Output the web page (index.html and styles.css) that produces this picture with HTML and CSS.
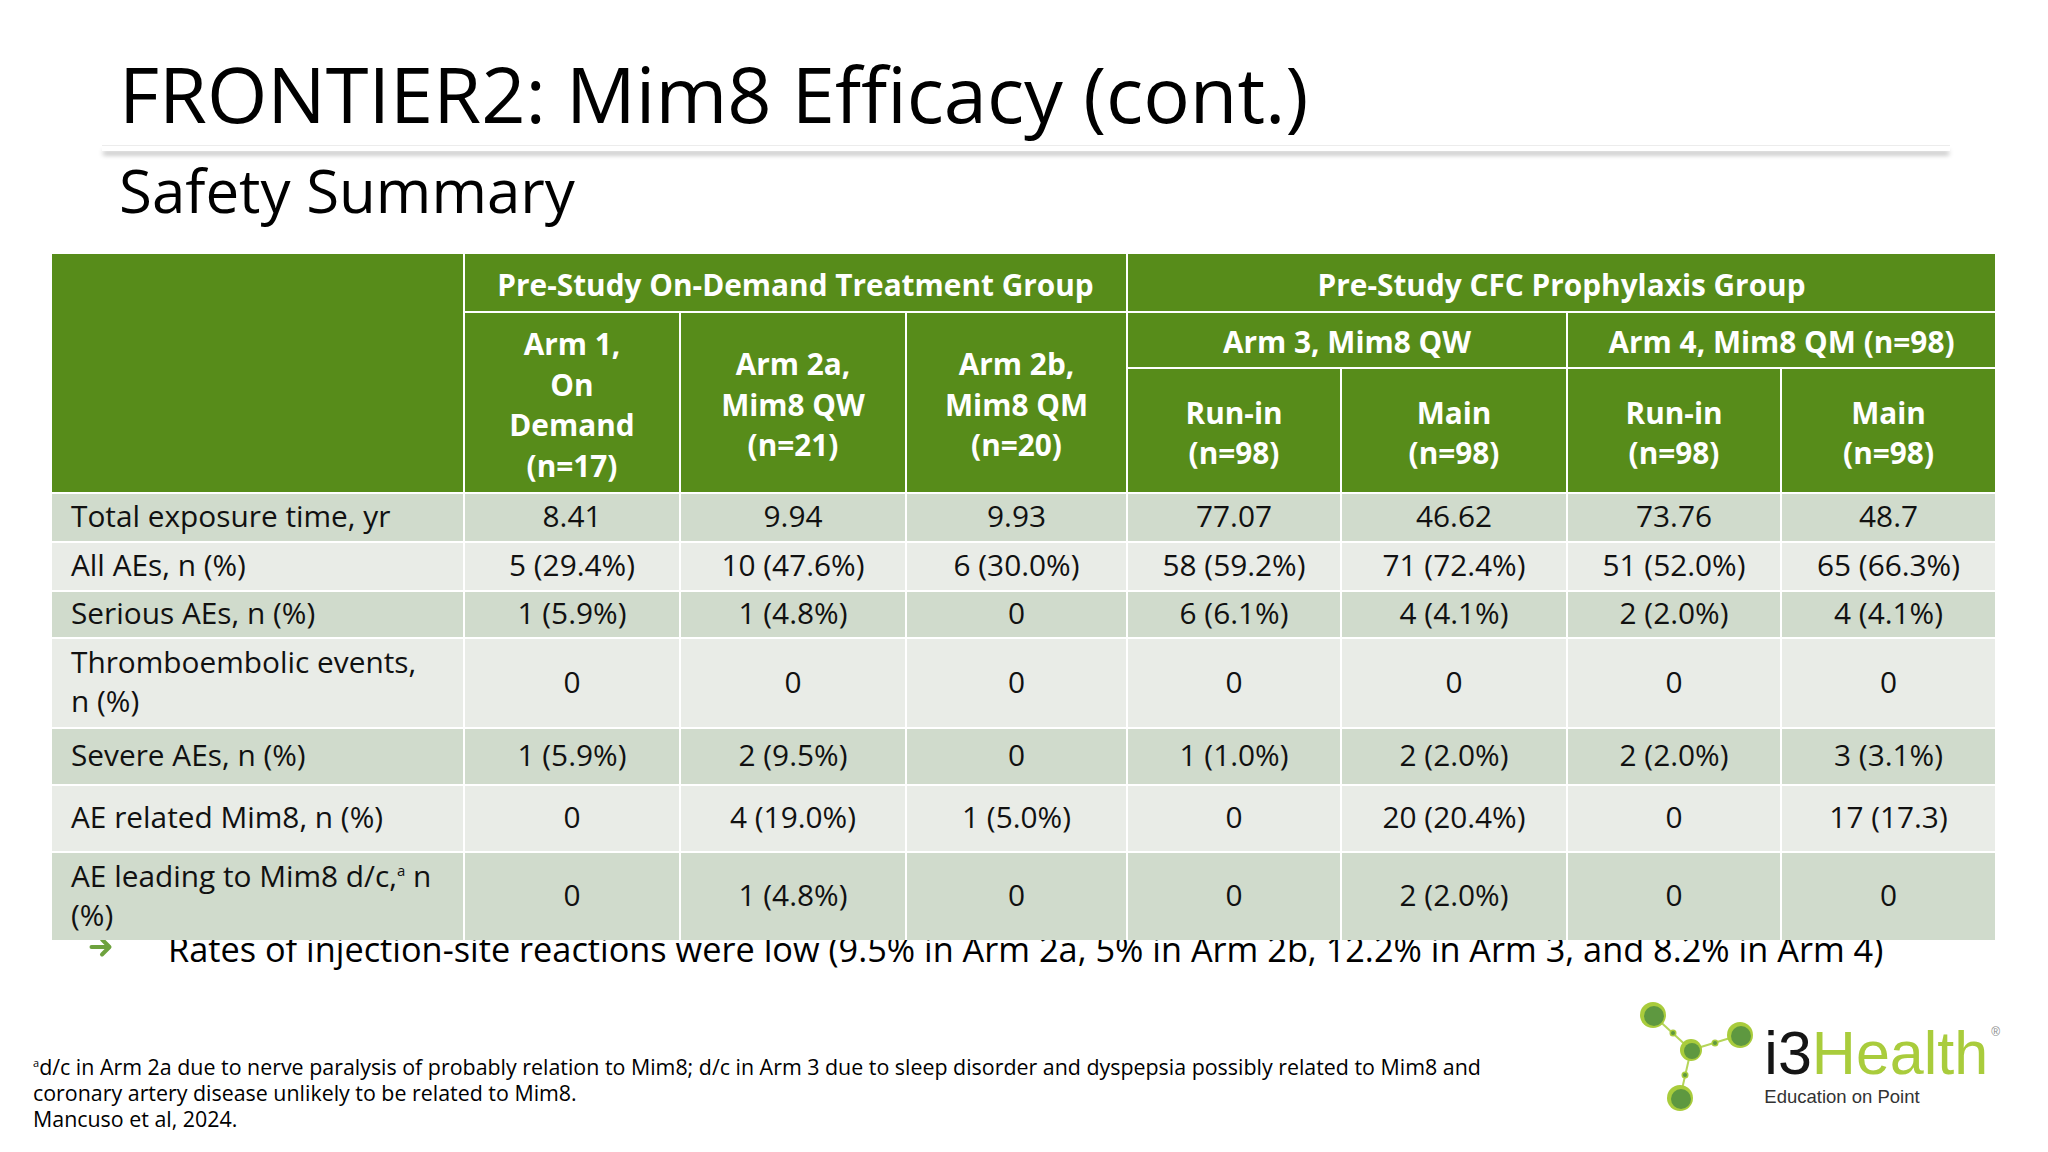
FILE: index.html
```html
<!DOCTYPE html>
<html lang="en">
<head>
<meta charset="utf-8">
<title>FRONTIER2: Mim8 Efficacy (cont.)</title>
<link rel="stylesheet" href="styles.css">
</head>
<body>
<div class="slide">
  <h1 class="title">FRONTIER2: Mim8 Efficacy (cont.)</h1>
  <div class="rule"></div>
  <h2 class="subtitle">Safety Summary</h2>

  <table class="safety">
    <colgroup>
      <col class="c-label">
      <col class="c-216">
      <col class="c-226">
      <col class="c-221">
      <col class="c-214">
      <col class="c-226">
      <col class="c-214">
      <col class="c-214">
    </colgroup>
    <thead>
      <tr class="h1">
        <th rowspan="3" class="corner"></th>
        <th colspan="3">Pre-Study On-Demand Treatment Group</th>
        <th colspan="4">Pre-Study CFC Prophylaxis Group</th>
      </tr>
      <tr class="h2">
        <th rowspan="2">Arm 1,<br>On<br>Demand<br>(n=17)</th>
        <th rowspan="2">Arm 2a,<br>Mim8 QW<br>(n=21)</th>
        <th rowspan="2">Arm 2b,<br>Mim8 QM<br>(n=20)</th>
        <th colspan="2">Arm 3, Mim8 QW</th>
        <th colspan="2">Arm 4, Mim8 QM (n=98)</th>
      </tr>
      <tr class="h3">
        <th>Run-in<br>(n=98)</th>
        <th>Main<br>(n=98)</th>
        <th>Run-in<br>(n=98)</th>
        <th>Main<br>(n=98)</th>
      </tr>
    </thead>
    <tbody>
      <tr class="dark r1">
        <td class="label">Total exposure time, yr</td>
        <td>8.41</td><td>9.94</td><td>9.93</td><td>77.07</td><td>46.62</td><td>73.76</td><td>48.7</td>
      </tr>
      <tr class="light r2">
        <td class="label">All AEs, n (%)</td>
        <td>5 (29.4%)</td><td>10 (47.6%)</td><td>6 (30.0%)</td><td>58 (59.2%)</td><td>71 (72.4%)</td><td>51 (52.0%)</td><td>65 (66.3%)</td>
      </tr>
      <tr class="dark r3">
        <td class="label">Serious AEs, n (%)</td>
        <td>1 (5.9%)</td><td>1 (4.8%)</td><td>0</td><td>6 (6.1%)</td><td>4 (4.1%)</td><td>2 (2.0%)</td><td>4 (4.1%)</td>
      </tr>
      <tr class="light r4">
        <td class="label">Thromboembolic events,<br>n (%)</td>
        <td>0</td><td>0</td><td>0</td><td>0</td><td>0</td><td>0</td><td>0</td>
      </tr>
      <tr class="dark r5">
        <td class="label">Severe AEs, n (%)</td>
        <td>1 (5.9%)</td><td>2 (9.5%)</td><td>0</td><td>1 (1.0%)</td><td>2 (2.0%)</td><td>2 (2.0%)</td><td>3 (3.1%)</td>
      </tr>
      <tr class="light r6">
        <td class="label">AE related Mim8, n (%)</td>
        <td>0</td><td>4 (19.0%)</td><td>1 (5.0%)</td><td>0</td><td>20 (20.4%)</td><td>0</td><td>17 (17.3)</td>
      </tr>
      <tr class="dark r7">
        <td class="label">AE leading to Mim8 d/c,<sup>a</sup> n<br>(%)</td>
        <td>0</td><td>1 (4.8%)</td><td>0</td><td>0</td><td>2 (2.0%)</td><td>0</td><td>0</td>
      </tr>
    </tbody>
  </table>

  <div class="bullet">
    <svg class="arrow" viewBox="0 0 24 24" width="24" height="24" aria-hidden="true">
      <path d="M2.5 12 H20 M13 4.5 L20.5 12 L13 19.5" fill="none" stroke="#6ea23e" stroke-width="4" stroke-linecap="round" stroke-linejoin="round"/>
    </svg>
    <p class="bullet-text">Rates of injection-site reactions were low (9.5% in Arm 2a, 5% in Arm 2b, 12.2% in Arm 3, and 8.2% in Arm 4)</p>
  </div>

  <footer class="footer">
    <div class="footnote">
      <p><sup>a</sup>d/c in Arm 2a due to nerve paralysis of probably relation to Mim8; d/c in Arm 3 due to sleep disorder and dyspepsia possibly related to Mim8 and</p>
      <p>coronary artery disease unlikely to be related to Mim8.</p>
      <p>Mancuso et al, 2024.</p>
    </div>
    <div class="logo">
      <svg class="logo-mark" viewBox="0 0 125 125" width="125" height="125" aria-hidden="true">
        <g stroke="#b5d55a" stroke-width="2" fill="none">
          <line x1="17" y1="20" x2="55" y2="55"/>
          <line x1="55" y1="55" x2="104" y2="40"/>
          <line x1="55" y1="55" x2="44" y2="103"/>
        </g>
        <g fill="#a9cc3c">
          <circle cx="17" cy="20" r="13"/>
          <circle cx="104" cy="40" r="13"/>
          <circle cx="55" cy="55" r="11"/>
          <circle cx="44" cy="103" r="13"/>
          <circle cx="37" cy="38" r="3.5"/>
          <circle cx="79" cy="48" r="3.5"/>
          <circle cx="49" cy="80" r="3.5"/>
        </g>
        <g fill="#5e9840">
          <circle cx="18" cy="21" r="10"/>
          <circle cx="105" cy="41" r="10"/>
          <circle cx="56" cy="56" r="8"/>
          <circle cx="45" cy="104" r="10"/>
          <circle cx="37" cy="38" r="2"/>
          <circle cx="79" cy="48" r="2"/>
          <circle cx="49" cy="80" r="2"/>
        </g>
      </svg>
      <div class="logo-text">
        <div class="brand"><span class="i3">i3</span><span class="health">Health</span><span class="reg">®</span></div>
        <div class="tagline">Education on Point</div>
      </div>
    </div>
  </footer>
</div>
</body>
</html>
```

FILE: styles.css
```css
* { box-sizing: border-box; }

html, body {
  margin: 0;
  padding: 0;
  background: #ffffff;
}

.slide {
  width: 2048px;
  height: 1152px;
  overflow: hidden;
  background: #ffffff;
  display: flex;
  flex-direction: column;
  font-family: "Open Sans", "Noto Sans", sans-serif;
  color: #111111;
}

.title {
  margin: 55px 0 0 119px;
  font-size: 77.6px;
  line-height: 77px;
  font-weight: 400;
  color: #000000;
  white-space: nowrap;
}

.rule {
  margin: 13px 0 0 102px;
  width: 1848px;
  height: 6px;
  background: #ffffff;
  border-top: 1px solid #ececec;
  box-shadow: 0 5px 5px -1px rgba(0, 0, 0, 0.28);
}

.subtitle {
  margin: 10px 0 0 119px;
  font-size: 60px;
  line-height: 59px;
  font-weight: 400;
  color: #000000;
}

.safety {
  position: relative;
  z-index: 1;
  margin: 34px 0 0 52px;
  width: 1943px;
  table-layout: fixed;
  border-collapse: collapse;
  font-size: 29.8px;
  line-height: 40px;
}

.c-label { width: 412px; }
.c-216 { width: 216px; }
.c-226 { width: 226px; }
.c-221 { width: 221px; }
.c-214 { width: 214px; }

.safety th,
.safety td {
  border: 2px solid #ffffff;
  padding: 0;
  text-align: center;
  vertical-align: middle;
}

.safety tr:first-child th { border-top: 0; }
.safety tr th:last-child,
.safety tr td:last-child { border-right: 0; }
.safety th.corner,
.safety td.label { border-left: 0; }
.safety tbody tr:last-child td { border-bottom: 0; }

.safety th {
  background: #578c1a;
  color: #ffffff;
  font-weight: 700;
  line-height: 40.5px;
  padding-top: 5px;
}

.h1 { height: 58px; }
.h2 { height: 56px; }
.h3 { height: 125px; }

.r1 { height: 49px; }
.r2 { height: 49px; }
.r3 { height: 47px; }
.r4 { height: 90px; }
.r5 { height: 57px; }
.r6 { height: 67px; }
.r7 { height: 88px; }

.safety td {
  color: #111111;
  line-height: 39px;
  padding-bottom: 4px;
}

.dark td { background: #d0dbcc; }
.light td { background: #e9ece7; }

.safety td.label {
  text-align: left;
  padding-left: 19px;
  white-space: nowrap;
}

.safety td.label sup {
  font-size: 15px;
  line-height: 0;
  vertical-align: 11px;
}

.bullet {
  display: flex;
  align-items: center;
  margin: -13px 0 0 89px;
  height: 44px;
}

.arrow {
  flex: none;
  width: 24px;
  height: 24px;
  margin-top: -4px;
}

.bullet-text {
  margin: 0 0 0 55px;
  font-size: 34.3px;
  line-height: 44px;
  color: #000000;
  white-space: nowrap;
}

.footer {
  margin-top: auto;
  display: flex;
  justify-content: space-between;
  align-items: flex-end;
  padding: 0 48px 20px 33px;
}

.footnote {
  font-size: 21.4px;
  line-height: 26px;
  color: #000000;
}

.footnote p { margin: 0; white-space: nowrap; }

.footnote sup {
  font-size: 11px;
  line-height: 0;
  vertical-align: 8px;
}

.logo {
  display: flex;
  align-items: flex-start;
  margin-bottom: 12px;
}

.logo-mark {
  flex: none;
  display: block;
}

.logo-text {
  margin: 28px 0 0 3px;
  font-family: "Liberation Sans", Arial, sans-serif;
}

.brand {
  font-size: 61px;
  line-height: 61px;
  white-space: nowrap;
}

.i3 { color: #151515; }
.health { color: #a9cc3c; }

.reg {
  font-size: 12px;
  line-height: 0;
  color: #8a8a8a;
  vertical-align: 38px;
  margin-left: 3px;
}

.tagline {
  margin-top: 2px;
  font-size: 18.5px;
  line-height: 22px;
  color: #333333;
  white-space: nowrap;
}
```
